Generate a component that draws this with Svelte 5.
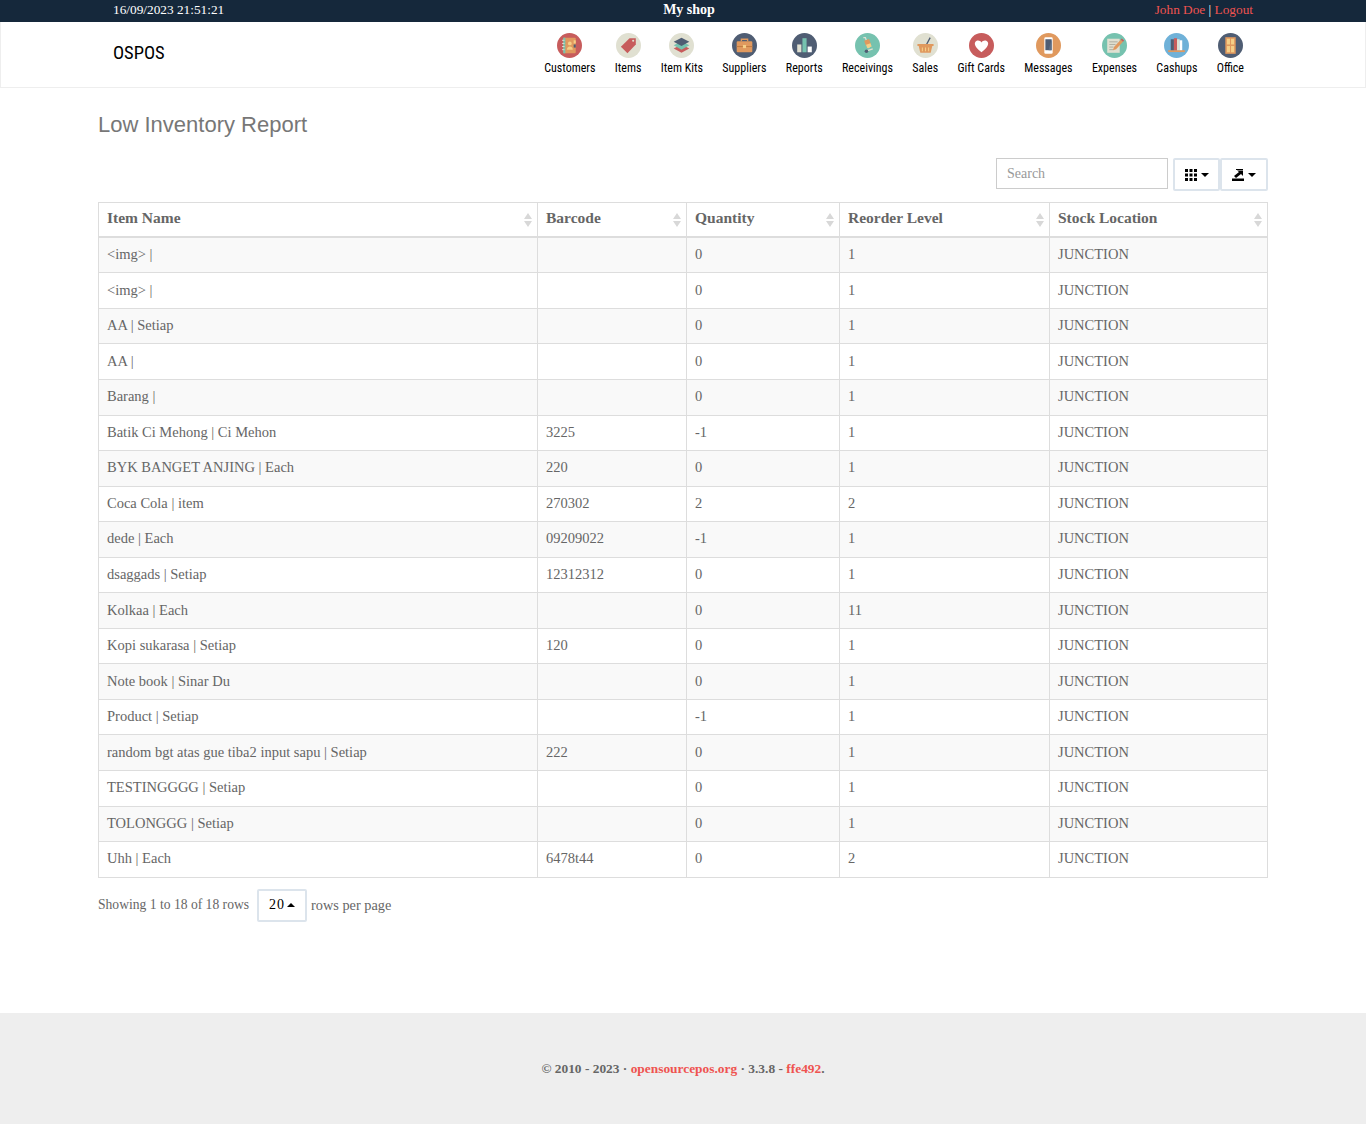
<script lang="ts">
  const navItems = [
    { key: 'customers', label: 'Customers' },
    { key: 'items', label: 'Items' },
    { key: 'kits', label: 'Item Kits' },
    { key: 'suppliers', label: 'Suppliers' },
    { key: 'reports', label: 'Reports' },
    { key: 'receivings', label: 'Receivings' },
    { key: 'sales', label: 'Sales' },
    { key: 'giftcards', label: 'Gift Cards' },
    { key: 'messages', label: 'Messages' },
    { key: 'expenses', label: 'Expenses' },
    { key: 'cashups', label: 'Cashups' },
    { key: 'office', label: 'Office' }
  ];

  const columns = ['Item Name', 'Barcode', 'Quantity', 'Reorder Level', 'Stock Location'];

  const rows = [
    ['<img> | ', '', '0', '1'],
    ['<img> | ', '', '0', '1'],
    ['AA | Setiap', '', '0', '1'],
    ['AA | ', '', '0', '1'],
    ['Barang | ', '', '0', '1'],
    ['Batik Ci Mehong | Ci Mehon', '3225', '-1', '1'],
    ['BYK BANGET ANJING | Each', '220', '0', '1'],
    ['Coca Cola | item', '270302', '2', '2'],
    ['dede | Each', '09209022', '-1', '1'],
    ['dsaggads | Setiap', '12312312', '0', '1'],
    ['Kolkaa | Each', '', '0', '11'],
    ['Kopi sukarasa | Setiap', '120', '0', '1'],
    ['Note book | Sinar Du', '', '0', '1'],
    ['Product | Setiap', '', '-1', '1'],
    ['random bgt atas gue tiba2 input sapu | Setiap', '222', '0', '1'],
    ['TESTINGGGG | Setiap', '', '0', '1'],
    ['TOLONGGG | Setiap', '', '0', '1'],
    ['Uhh | Each', '6478t44', '0', '2']
  ];
</script>

{#snippet icon(key)}
  <svg class="nav-icon" viewBox="0 0 24 24" aria-hidden="true">
    {#if key === 'customers'}
      <circle cx="12" cy="12" r="12" fill="#c75c5c" />
      <rect x="6" y="4.5" width="12" height="15" rx="1" fill="#e0995e" />
      <rect x="6" y="4.5" width="2" height="15" fill="#76c2af" />
      <rect x="16" y="7" width="2" height="3" fill="#f5cf87" />
      <rect x="16" y="11" width="2" height="3" fill="#4f5d73" />
      <circle cx="12.3" cy="10" r="1.8" fill="#f5cf87" />
      <path d="M9.5 16c0-4 5.6-4 5.6 0z" fill="#f5cf87" />
      <path d="M4.8 7h2.4M4.8 10h2.4M4.8 13h2.4M4.8 16h2.4" stroke="#e0e0d1" stroke-width="0.9" />
    {:else if key === 'items'}
      <circle cx="12" cy="12" r="12" fill="#e0e0d1" />
      <path d="M13 5h6v6l-8 8.5-6.300-6.300z" fill="#c75c5c" />
      <circle cx="16.500" cy="7.500" r="1" fill="#e0e0d1" />
    {:else if key === 'kits'}
      <circle cx="12" cy="12" r="12" fill="#e0e0d1" />
      <path d="M12 11l7.500 3.800L12 19l-7.500-4.200z" fill="#c75c5c" />
      <path d="M12 8l7.500 3.800L12 16l-7.500-4.200z" fill="#76c2af" />
      <path d="M12 4.500l7.500 3.800L12 12.500 4.500 8.300z" fill="#4f5d73" />
    {:else if key === 'suppliers'}
      <circle cx="12" cy="12" r="12" fill="#4f5d73" />
      <path d="M9 8V6h6v2" fill="none" stroke="#e0995e" stroke-width="1.300" />
      <rect x="4.500" y="8" width="15" height="10.500" rx="1" fill="#e0995e" />
      <rect x="4.500" y="12.500" width="15" height="1" fill="#c27c43" />
      <rect x="10.500" y="11.500" width="3" height="3" fill="#f5cf87" />
    {:else if key === 'reports'}
      <circle cx="12" cy="12" r="12" fill="#4f5d73" />
      <rect x="5" y="11" width="4" height="7.500" fill="#e0e0d1" />
      <rect x="10" y="5" width="4" height="13.500" fill="#76c2af" />
      <rect x="15" y="13" width="4" height="5.500" fill="#fff" />
    {:else if key === 'receivings'}
      <circle cx="12" cy="12" r="12" fill="#76c2af" />
      <path d="M8 4.500l2 0 3.500 10" fill="none" stroke="#e0e0d1" stroke-width="1.200" />
      <rect x="9.500" y="6.500" width="5" height="5" transform="rotate(-20 12 9)" fill="#e0995e" />
      <rect x="11" y="10.500" width="4.500" height="3.500" transform="rotate(-20 13 12)" fill="#f5cf87" />
      <path d="M12 17l5-1.800" stroke="#e0e0d1" stroke-width="1.200" />
      <circle cx="11" cy="17.500" r="1.700" fill="#4f5d73" />
    {:else if key === 'sales'}
      <circle cx="12" cy="12" r="12" fill="#e0e0d1" />
      <path d="M13 11l3.500-6.500" stroke="#4f5d73" stroke-width="1.300" />
      <path d="M5.500 12.500h13l-1.500 6.500H7z" fill="#e0995e" />
      <rect x="4" y="10.500" width="16" height="2" rx="1" fill="#e0995e" />
      <path d="M9 14v3.500M12 14v3.500M15 14v3.500" stroke="#f5cf87" stroke-width="1" />
    {:else if key === 'giftcards'}
      <circle cx="12" cy="12" r="12" fill="#c75c5c" />
      <path d="M12 18.500C5 13.500 5 10 6.200 8.500c1.600-2 4.500-1.400 5.800.6 1.300-2 4.200-2.600 5.800-.6C19 10 19 13.500 12 18.500z" fill="#fff" />
    {:else if key === 'messages'}
      <circle cx="12" cy="12" r="12" fill="#e0995e" />
      <rect x="8" y="4" width="8" height="16" rx="1.200" fill="#fff" />
      <rect x="9" y="6" width="6" height="10.500" fill="#4f5d73" />
      <path d="M15 6v10.500h-3z" fill="#5d6d85" />
    {:else if key === 'expenses'}
      <circle cx="12" cy="12" r="12" fill="#76c2af" />
      <rect x="5" y="5.500" width="12" height="13.500" fill="#e0e0d1" />
      <path d="M7 8.500h8M7 11h6M7 13.500h4M7 16h4" stroke="#a5a598" stroke-width="0.800" />
      <path d="M10.500 16.500l1-3 6.500-7 2.200 2-6.700 7z" fill="#e0995e" />
      <path d="M18 6.500l2.200 2 1-1.200-2.200-2z" fill="#c75c5c" />
    {:else if key === 'cashups'}
      <circle cx="12" cy="12" r="12" fill="#6fb1d8" />
      <rect x="4" y="16.500" width="16" height="1.800" fill="#e0995e" />
      <rect x="6.500" y="6" width="3" height="10.500" fill="#4f5d73" />
      <rect x="9.500" y="5" width="3" height="11.500" fill="#c75c5c" />
      <rect x="12.500" y="6" width="2.500" height="10.500" fill="#e0e0d1" />
      <rect x="15" y="7" width="2.500" height="9.500" fill="#fff" />
    {:else if key === 'office'}
      <circle cx="12" cy="12" r="12" fill="#4f5d73" />
      <rect x="7" y="4" width="10" height="16" fill="#e0995e" />
      <rect x="8.500" y="5.500" width="3" height="5.500" fill="#f5cf87" />
      <rect x="12.500" y="5.500" width="3" height="5.500" fill="#f5cf87" />
      <rect x="8.500" y="12.500" width="3" height="6" fill="#f5cf87" />
      <rect x="12.500" y="12.500" width="3" height="6" fill="#f5cf87" />
    {/if}
  </svg>
{/snippet}

<div class="topbar">
  <div class="topbar-inner">
    <span class="clock">16/09/2023 21:51:21</span>
    <span class="shop">My shop</span>
    <span class="user"><a href="#top">John Doe</a> | <a href="#top">Logout</a></span>
  </div>
</div>

<nav class="navbar">
  <div class="brand">OSPOS</div>
  <ul class="nav-list">
    {#each navItems as item}
      <li>
        {@render icon(item.key)}
        <span>{item.label}</span>
      </li>
    {/each}
  </ul>
</nav>

<main class="wrapper">
  <h1>Low Inventory Report</h1>

  <div class="toolbar">
    <input class="search" type="text" placeholder="Search" />
    <div class="btn-group">
      <button class="tool-btn" aria-label="Columns">
        <svg class="tool-icon" viewBox="0 0 12 12">
          <path d="M0 0h3v3H0zM4.500 0h3v3h-3zM9 0h3v3H9zM0 4.500h3v3H0zM4.500 4.500h3v3h-3zM9 4.500h3v3H9zM0 9h3v3H0zM4.500 9h3v3h-3zM9 9h3v3H9z" fill="#000" />
        </svg>
        <i class="caret"></i>
      </button>
      <button class="tool-btn" aria-label="Export">
        <svg class="tool-icon" viewBox="0 0 12 12">
          <path d="M4 0h7v1H4z" fill="#000" />
          <path d="M2 7l5-4-2-1.500h6V7L9 5 4 9z" fill="#000" />
          <path d="M0 9.500h12V12H0z" fill="#000" />
        </svg>
        <i class="caret"></i>
      </button>
    </div>
  </div>

  <table>
    <colgroup>
      <col style="width: 439px" />
      <col style="width: 149px" />
      <col style="width: 153px" />
      <col style="width: 210px" />
      <col style="width: 218px" />
    </colgroup>
    <thead>
      <tr>
        {#each columns as col}
          <th>
            {col}
            <span class="sort"><i class="up"></i><i class="down"></i></span>
          </th>
        {/each}
      </tr>
    </thead>
    <tbody>
      {#each rows as row, i}
        <tr class:odd={i % 2 === 0}>
          {#each row as cell}
            <td>{cell}</td>
          {/each}
          <td>JUNCTION</td>
        </tr>
      {/each}
    </tbody>
  </table>

  <div class="pagination">
    <span class="showing">Showing 1 to 18 of 18 rows</span>
    <button class="page-btn">20 <i class="caret up"></i></button>
    <span>rows per page</span>
  </div>
</main>

<footer>
  © 2010 - 2023 · <a href="#top">opensourcepos.org</a> · 3.3.8 - <a href="#top">ffe492</a>.
</footer>

<style>
  :global(body) {
    margin: 0;
    background: #fff;
    font-family: "Liberation Serif", serif;
    color: #666;
  }

  a {
    color: #ef5350;
    text-decoration: none;
  }

  .topbar {
    height: 22px;
    background: #15283b;
    color: #fff;
    font-size: 13.300px;
    line-height: 20px;
  }

  .topbar-inner {
    display: grid;
    grid-template-columns: 1fr auto 1fr;
    padding: 0 113px;
  }

  .shop {
    font-size: 14px;
    font-weight: bold;
    margin-left: 12px;
  }

  .user {
    text-align: right;
  }

  .navbar {
    display: flex;
    justify-content: space-between;
    height: 65px;
    border: 1px solid #eee;
    border-top: 0;
    padding-left: 112px;
    padding-right: 121px;
    box-sizing: content-box;
    width: calc(1366px - 235px);
  }

  .brand {
    font-family: Roboto, "Liberation Sans", sans-serif;
    font-stretch: 75%;
    font-size: 18.500px;
    color: #000;
    line-height: 63px;
  }

  .nav-list {
    display: flex;
    gap: 19.300px;
    list-style: none;
    margin: 0;
    padding: 11px 0 0;
    color: #000;
    font-family: Roboto, "Liberation Sans", sans-serif;
    font-stretch: 75%;
    font-size: 12px;
  }

  .nav-list li {
    display: flex;
    flex-direction: column;
    align-items: center;
    gap: 3px;
  }

  .nav-icon {
    width: 25px;
    height: 25px;
  }

  .wrapper {
    width: 1170px;
    margin-left: 98px;
    height: 925px;
  }

  h1 {
    margin: 0;
    padding-top: 23px;
    font-family: "Liberation Sans", sans-serif;
    font-weight: 400;
    font-size: 22px;
    line-height: 28px;
    color: #777;
  }

  .toolbar {
    display: flex;
    justify-content: flex-end;
    align-items: flex-start;
    gap: 5px;
    margin-top: 19px;
  }

  .search {
    width: 172px;
    height: 31px;
    box-sizing: border-box;
    border: 1px solid #ccc;
    padding: 0 10px;
    font: 14px "Liberation Serif", serif;
    color: #666;
  }

  .search::placeholder {
    color: #999;
  }

  .btn-group {
    display: flex;
  }

  .tool-btn {
    display: flex;
    align-items: center;
    justify-content: center;
    gap: 4px;
    width: 47px;
    height: 33px;
    background: #fff;
    border: 2px solid #dce4ec;
    border-radius: 2px;
    padding: 0;
  }

  .tool-btn + .tool-btn {
    width: 48px;
  }

  .tool-icon {
    width: 12px;
    height: 12px;
  }

  .caret {
    display: inline-block;
    width: 0;
    height: 0;
    border-top: 4px solid #000;
    border-left: 4px solid transparent;
    border-right: 4px solid transparent;
  }

  .caret.up {
    border-top: 0;
    border-bottom: 4px solid #000;
  }

  table {
    width: 1169px;
    margin-top: 11px;
    border-collapse: collapse;
    table-layout: fixed;
    font-size: 14.500px;
  }

  th, td {
    border: 1px solid #ddd;
    padding: 0 8px;
    text-align: left;
    color: #666;
  }

  th {
    position: relative;
    height: 34.800px;
    padding-bottom: 3px;
    box-sizing: border-box;
    border-bottom-width: 2px;
    font-size: 15.500px;
    font-weight: bold;
  }

  td {
    height: 35.550px;
    padding-bottom: 1px;
    box-sizing: border-box;
    white-space: pre;
  }

  .odd td {
    background: #f9f9f9;
  }

  .sort {
    position: absolute;
    right: 5px;
    top: 10px;
    display: flex;
    flex-direction: column;
    gap: 2px;
  }

  .sort i {
    width: 0;
    height: 0;
    border-left: 4px solid transparent;
    border-right: 4px solid transparent;
  }

  .sort .up {
    border-bottom: 6px solid #d8d8d8;
  }

  .sort .down {
    border-top: 6px solid #d8d8d8;
  }

  .pagination {
    display: flex;
    align-items: center;
    gap: 4px;
    margin-top: 11px;
    font-size: 14.300px;
  }

  .showing {
    font-size: 13.600px;
    margin-right: 4px;
  }

  .page-btn {
    display: flex;
    align-items: center;
    justify-content: center;
    gap: 2px;
    width: 50px;
    height: 33px;
    background: #fff;
    border: 2px solid #dce4ec;
    border-radius: 2px;
    font: 14px "Liberation Serif", serif;
    letter-spacing: 1px;
    color: #000;
    padding: 0;
  }

  footer {
    height: 111px;
    background: #eee;
    text-align: center;
    font-size: 13.400px;
    font-weight: bold;
    line-height: 111px;
    color: #666;
  }
</style>
